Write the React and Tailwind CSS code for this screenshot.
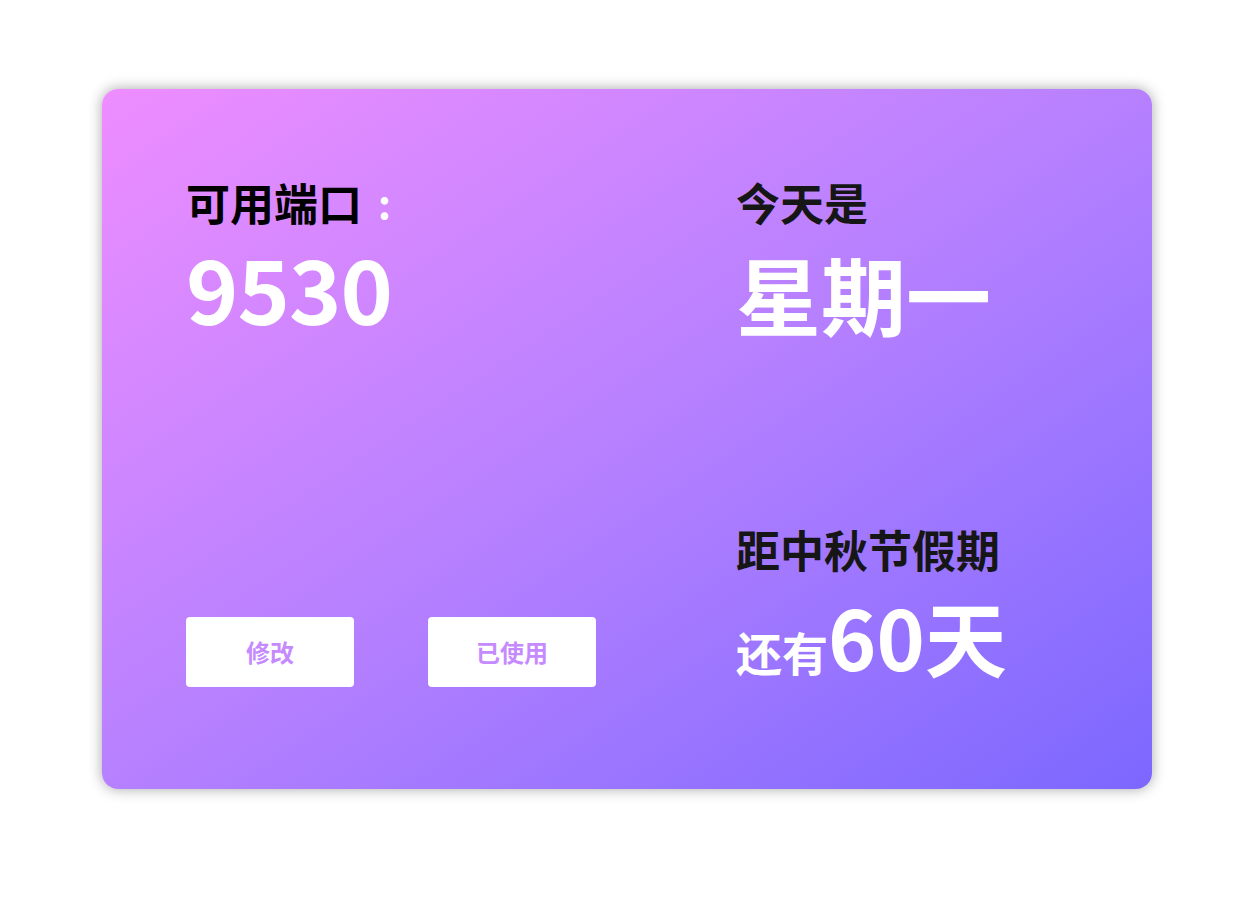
export default function App() {
  const font = { fontFamily: '"Noto Sans CJK SC", "Noto Sans", sans-serif' };
  return (
    <div className="min-h-screen bg-white pt-[89px] pl-[102px]" style={font}>
      <div className="w-[1050px] h-[700px] rounded-2xl bg-linear-to-br from-[#ee8dff] via-[#b680ff] to-[#7c67ff] shadow-[0_0_14px_rgba(0,0,0,0.35)] pl-[84px] pt-[91px] pb-[102px] flex">
        {/* left column */}
        <div className="w-[550px] flex flex-col justify-between">
          <div>
            <div className="flex items-center text-[44px] leading-none font-bold text-black">
              <span>可用端口</span>
              <span className="ml-[16px] text-white text-[40px]">:</span>
            </div>
            <div className="mt-[18px] text-[89px] leading-none font-bold text-white tracking-[-1px]">9530</div>
          </div>
          <div className="flex gap-[74px]">
            <button className="w-[168px] h-[70px] rounded bg-white text-[24px] font-bold text-[#c68aff]">修改</button>
            <button className="w-[168px] h-[70px] rounded bg-white text-[24px] font-bold text-[#c68aff]">已使用</button>
          </div>
        </div>
        {/* right column */}
        <div className="flex flex-col justify-between">
          <div>
            <div className="text-[44px] leading-none font-bold text-[#161616]">今天是</div>
            <div className="mt-[26px] text-[85px] leading-none font-bold text-white">星期一</div>
          </div>
          <div className="pb-[10px]">
            <div className="text-[44px] leading-none font-bold text-[#161616]">距中秋节假期</div>
            <div className="mt-[24px] flex items-baseline text-white font-bold leading-none">
              <span className="text-[46px]">还有</span>
              <span className="text-[82px]">60天</span>
            </div>
          </div>
        </div>
      </div>
    </div>
  );
}
